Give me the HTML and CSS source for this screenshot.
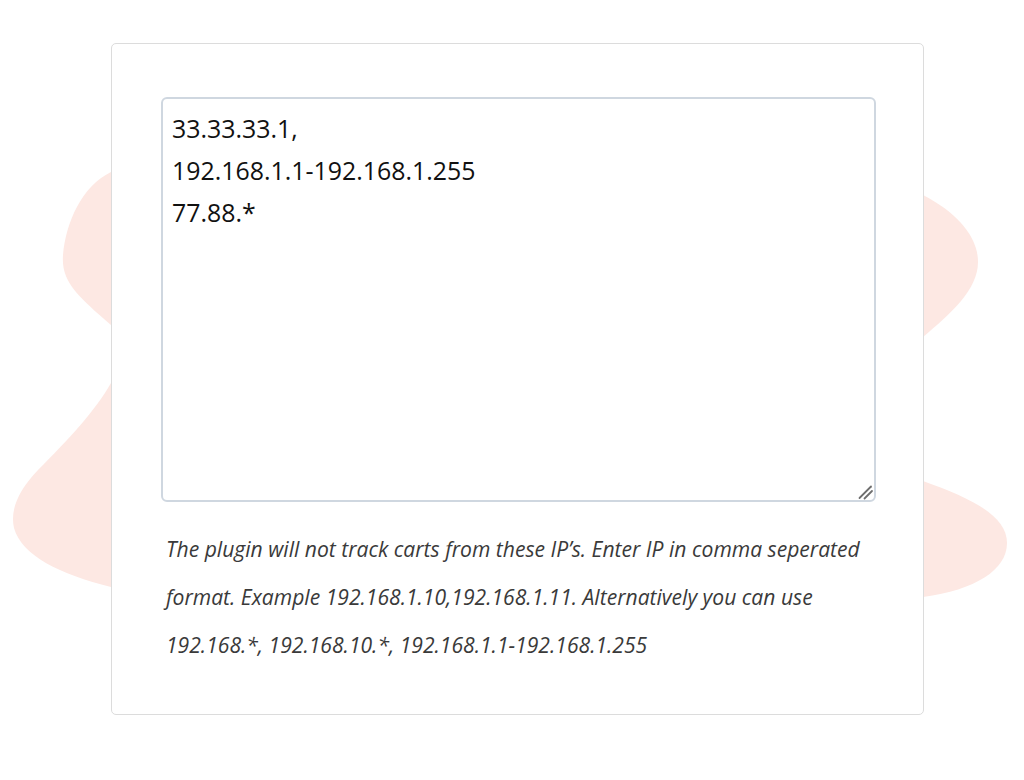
FILE: index.html
```html
<!DOCTYPE html>
<html lang="en">
<head>
<meta charset="utf-8">
<title>Exclude IPs</title>
<link rel="stylesheet" href="styles.css">
</head>
<body>
<div class="page">
  <svg class="blobs" width="1024" height="780" viewBox="0 0 1024 780" aria-hidden="true">
    <path d="M160 172 L111 172 C82 186 66 222 63 255 C61 282 78 296 111 325 L160 325 Z"/>
    <path d="M160 383 L111 383 C96 410 68 440 38 470 C18 491 10 510 14 528 C22 556 60 574 111 587 L160 587 Z"/>
    <path d="M880 195 L923 195 C956 212 978 236 978 262 C978 290 950 314 923 337 L880 337 Z"/>
    <path d="M880 481 L923 481 C970 498 1007 515 1007 543 C1007 570 975 590 923 597 L880 597 Z"/>
  </svg>
  <div class="card">
    <div class="field">
      <textarea class="ip-list" spellcheck="false">33.33.33.1,
192.168.1.1-192.168.1.255
77.88.*</textarea>
      <svg class="grip" width="16" height="16" viewBox="0 0 16 16" aria-hidden="true">
        <line x1="1.5" y1="14" x2="13" y2="2.5"/>
        <line x1="6.5" y1="14.5" x2="14" y2="7"/>
      </svg>
    </div>
    <p class="hint">The plugin will not track carts from these IP’s. Enter IP in comma seperated format. Example 192.168.1.10,192.168.1.11. Alternatively you can use 192.168.*, 192.168.10.*, 192.168.1.1-192.168.1.255</p>
  </div>
</div>
</body>
</html>
```
FILE: styles.css
```css
html, body {
  margin: 0;
  padding: 0;
  background: #ffffff;
}

.page {
  position: relative;
  width: 1024px;
  height: 780px;
  overflow: hidden;
  padding-top: 43px;
  box-sizing: border-box;
}

.blobs {
  position: absolute;
  left: 0;
  top: 0;
  z-index: 0;
}

.blobs path {
  fill: #fde8e3;
}

.card {
  position: relative;
  z-index: 1;
  margin-left: 111px;
  width: 813px;
  box-sizing: border-box;
  background: #ffffff;
  border: 1px solid #dcdcdc;
  border-radius: 5px;
  padding: 53px 47px 45px 49px;
}

.field {
  position: relative;
}

.ip-list {
  display: block;
  width: 100%;
  height: 405px;
  box-sizing: border-box;
  margin: 0;
  padding: 8px 9px;
  border: 2px solid #cfd7e0;
  border-radius: 6px;
  font-family: "Open Sans", "Noto Sans", sans-serif;
  font-size: 24.9px;
  font-weight: 500;
  line-height: 42px;
  color: #111111;
  background: #ffffff;
  outline: none;
  resize: none;
}

.grip {
  position: absolute;
  right: 2px;
  bottom: 2px;
  pointer-events: none;
}

.grip line {
  stroke: #6e6e6e;
  stroke-width: 1.8;
  stroke-linecap: round;
}

.hint {
  margin: 23px 0 0 0;
  padding-left: 5px;
  font-family: "Open Sans", "Noto Sans", sans-serif;
  font-style: italic;
  font-size: 21.1px;
  line-height: 48px;
  color: #3a3a3a;
}
```
